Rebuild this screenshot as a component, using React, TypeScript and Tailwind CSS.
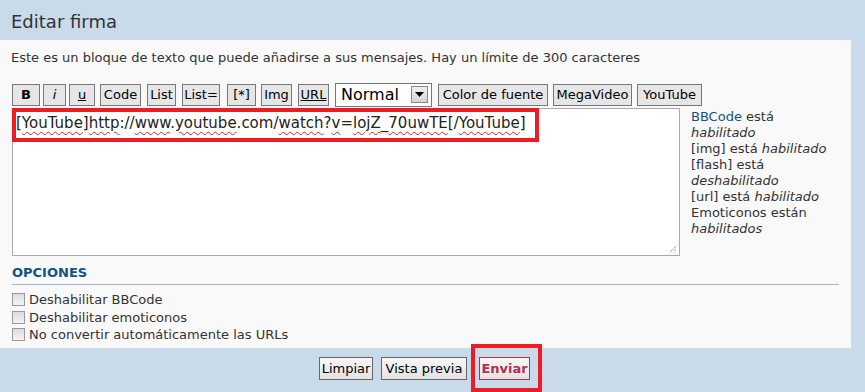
import React from 'react';

const font = { fontFamily: '"DejaVu Sans", Verdana, sans-serif' };

function ToolButton({ label, className = '' }: { label: string; className?: string }) {
  return (
    <button
      className={`h-[22px] px-0 border border-[#777] bg-[#e6e6e6] text-[13px] leading-none text-black shrink-0 ${className}`}
    >
      {label}
    </button>
  );
}

function Option({ label }: { label: string }) {
  return (
    <label className="flex items-center gap-[4px] h-[17.5px] text-[13px] text-[#333]">
      <span className="w-[13px] h-[13px] border border-[#999] bg-gradient-to-b from-[#dcdcdc] to-[#f4f4f4]" />
      {label}
    </label>
  );
}

function Sq({ children }: { children: React.ReactNode }) {
  return <span className="underline decoration-wavy decoration-[#e02020] decoration-1 underline-offset-[3px]">{children}</span>;
}

export default function App() {
  return (
    <div style={font} className="w-[865px] h-[392px] bg-[#c9daea] relative overflow-hidden">
      <div className="h-[40px] pl-[11px] pt-[8px] text-[18px] text-[#333]">Editar firma</div>

      <div className="w-[851px] h-[308px] bg-[#f9f9f9] px-[12px] pt-[8px]">
        <p className="text-[13px] text-[#333] -ml-[1px]">
          Este es un bloque de texto que puede añadirse a sus mensajes. Hay un límite de 300 caracteres
        </p>

        <div className="flex items-center mt-[15px]">
          <ToolButton label="B" className="w-[28px] font-bold" />
          <ToolButton label="i" className="w-[23px] italic ml-[3px]" />
          <ToolButton label="u" className="w-[26px] underline ml-[3px]" />
          <ToolButton label="Code" className="w-[41px] ml-[5px]" />
          <ToolButton label="List" className="w-[29px] ml-[6px]" />
          <ToolButton label="List=" className="w-[38px] ml-[6px]" />
          <ToolButton label="[*]" className="w-[29px] ml-[7px]" />
          <ToolButton label="Img" className="w-[31px] ml-[5px]" />
          <ToolButton label="URL" className="w-[31px] underline ml-[6px]" />
          <div className="ml-[6px] w-[97px] h-[24px] border border-[#777] bg-white flex items-center justify-between pl-[5px] pr-[3px] shrink-0">
            <span className="text-[16px] text-black">Normal</span>
            <span className="w-[17px] h-[17px] border border-[#888] bg-gradient-to-b from-[#f0f0f0] to-[#d4d4d4] flex items-center justify-center">
              <svg width="9" height="5" viewBox="0 0 9 5"><path d="M0 0h9L4.5 5z" fill="#000" /></svg>
            </span>
          </div>
          <ToolButton label="Color de fuente" className="w-[110px] ml-[6px]" />
          <ToolButton label="MegaVideo" className="w-[79px] ml-[5px]" />
          <ToolButton label="YouTube" className="w-[65px] ml-[5px]" />
        </div>

        <div className="flex mt-[1px]">
          <div className="relative w-[668px] h-[148px] border border-[#aaa] bg-white shrink-0">
            <div className="pl-[3px] pt-[3px] text-[15px] text-[#222] whitespace-nowrap">
              [<Sq>YouTube</Sq>]<Sq>http</Sq>://<Sq>www</Sq>.<Sq>youtube</Sq>.com/<Sq>watch</Sq>?<Sq>v</Sq>=<Sq>lojZ</Sq>_<Sq>70uwTE</Sq>[/<Sq>YouTube</Sq>]
            </div>
            <svg className="absolute right-[2px] bottom-[2px]" width="8" height="8" viewBox="0 0 8 8">
              <path d="M7 1L1 7M7 4L4 7" stroke="#777" strokeWidth="1" strokeDasharray="1 1" />
            </svg>
          </div>
          <div className="ml-[11px] mt-[1px] text-[13px] leading-[16px] text-[#333]">
            <div><span className="text-[#105289]">BBCode</span> está</div>
            <div className="italic">habilitado</div>
            <div>[img] está <i>habilitado</i></div>
            <div>[flash] está</div>
            <div className="italic">deshabilitado</div>
            <div>[url] está <i>habilitado</i></div>
            <div>Emoticonos están</div>
            <div className="italic">habilitados</div>
          </div>
        </div>

        <div className="mt-[7px] border-b border-[#a6b8c8] pb-[2px] text-[13px] font-bold text-[#105289]">OPCIONES</div>
        <div className="mt-[6px]">
          <Option label="Deshabilitar BBCode" />
          <Option label="Deshabilitar emoticonos" />
          <Option label="No convertir automáticamente las URLs" />
        </div>
      </div>

      <div className="flex justify-center pt-[9px] pr-[16px]">
        <button className="w-[54px] h-[23px] border border-[#666] bg-gradient-to-b from-[#f7f7f7] to-[#e3e3e3] text-[13px] text-black">Limpiar</button>
        <button className="ml-[8px] w-[86px] h-[23px] border border-[#666] bg-gradient-to-b from-[#f7f7f7] to-[#e3e3e3] text-[13px] text-black">Vista previa</button>
        <button className="ml-[12px] w-[51px] h-[23px] border border-[#bc2a4d] bg-gradient-to-b from-[#f7f7f7] to-[#e3e3e3] text-[13px] font-bold text-[#bc2a4d]">Enviar</button>
      </div>

      {/* annotation boxes */}
      <div className="absolute left-[12px] top-[108px] w-[527px] h-[34px] border-[4px] border-[#ed1c24]" />
      <div className="absolute left-[471px] top-[344px] w-[71px] h-[48px] border-[4px] border-[#ed1c24]" />
    </div>
  );
}
